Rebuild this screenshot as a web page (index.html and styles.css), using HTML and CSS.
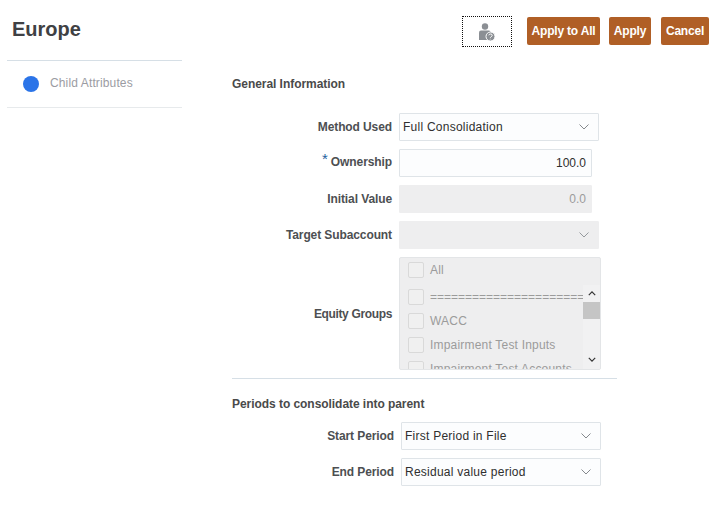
FILE: index.html
```html
<!DOCTYPE html>
<html lang="en">
<head>
<meta charset="utf-8">
<title>Europe</title>
<link rel="stylesheet" href="styles.css">
</head>
<body>
<div class="page">
  <header class="top">
    <h1 class="title">Europe</h1>
    <div class="actions">
      <button class="help" type="button" aria-label="Help">
        <svg width="18" height="20" viewBox="0 0 18 20">
          <circle cx="7" cy="4.500" r="3.200" fill="#8b8f94"/>
          <path d="M1 10.500 Q1 8.500 3 8.500 H11 Q12.500 8.500 12.500 10 V18 H1 Z" fill="#8b8f94"/>
          <circle cx="12.500" cy="14.500" r="4.500" fill="#8b8f94" stroke="#fff" stroke-width="1"/>
          <path d="M10.800 13.300 Q11 12 12.500 12 Q14.300 12 14.200 13.400 Q14.100 14.300 12.800 15 L12.300 15.700 M12.200 16.800 V17.400" fill="none" stroke="#fff" stroke-width="1"/>
        </svg>
      </button>
      <button class="btn btn-all" type="button">Apply to All</button>
      <button class="btn btn-apply" type="button">Apply</button>
      <button class="btn" type="button">Cancel</button>
    </div>
  </header>
  <div class="content">
    <nav class="side">
      <div class="side-item"><span class="dot"></span><span class="side-text">Child Attributes</span></div>
    </nav>
    <main class="main">
      <h2 class="heading">General Information</h2>
      <div class="rows">
        <div class="row">
          <label class="label">Method Used</label>
          <div class="field select"><span>Full Consolidation</span><svg class="chev" viewBox="0 0 10 6"><path d="M.5 .5 L5 5 L9.500 .5" fill="none" stroke="#85898d" stroke-width="1"/></svg></div>
        </div>
        <div class="row">
          <label class="label label-req"><span class="req">*</span> Ownership</label>
          <div class="field short num">100.0</div>
        </div>
        <div class="row">
          <label class="label">Initial Value</label>
          <div class="field short num off">0.0</div>
        </div>
        <div class="row">
          <label class="label">Target Subaccount</label>
          <div class="field select off"><span></span><svg class="chev" viewBox="0 0 10 6"><path d="M.5 .5 L5 5 L9.500 .5" fill="none" stroke="#95999d" stroke-width="1"/></svg></div>
        </div>
        <div class="row row-list">
          <label class="label label-tight">Equity Groups</label>
          <div class="listbox">
            <div class="opt opt-first"><span class="check"></span><span>All</span></div>
            <div class="scroller">
              <div class="items">
                <div class="opt"><span class="check"></span><span class="clip">==============================</span></div>
                <div class="opt"><span class="check"></span><span>WACC</span></div>
                <div class="opt"><span class="check"></span><span>Impairment Test Inputs</span></div>
                <div class="opt"><span class="check"></span><span>Impairment Test Accounts</span></div>
              </div>
              <div class="scrollbar">
                <svg class="sb-arrow" viewBox="0 0 10 6"><path d="M1 5 L5 1 L9 5" fill="none" stroke="#333" stroke-width="1.500"/></svg>
                <div class="thumb"></div>
                <svg class="sb-arrow sb-down" viewBox="0 0 10 6"><path d="M1 1 L5 5 L9 1" fill="none" stroke="#333" stroke-width="1.500"/></svg>
              </div>
            </div>
          </div>
        </div>
      </div>
      <hr class="rule">
      <h2 class="heading heading-2">Periods to consolidate into parent</h2>
      <div class="rows rows-2">
        <div class="row">
          <label class="label">Start Period</label>
          <div class="field select"><span>First Period in File</span><svg class="chev" viewBox="0 0 10 6"><path d="M.5 .5 L5 5 L9.500 .5" fill="none" stroke="#85898d" stroke-width="1"/></svg></div>
        </div>
        <div class="row">
          <label class="label">End Period</label>
          <div class="field select"><span>Residual value period</span><svg class="chev" viewBox="0 0 10 6"><path d="M.5 .5 L5 5 L9.500 .5" fill="none" stroke="#85898d" stroke-width="1"/></svg></div>
        </div>
      </div>
    </main>
  </div>
</div>
</body>
</html>
```
FILE: styles.css
```css
* { box-sizing: border-box; }
html, body { margin: 0; padding: 0; background: #fff; }
body { font-family: "Liberation Sans", Arial, sans-serif; font-size: 12px; color: #2f2f2f; }
.page { width: 724px; height: 509px; overflow: hidden; }

.top { display: flex; justify-content: space-between; height: 60px; padding: 16px 15px 0 12px; }
.title { margin: 2px 0 0; font-size: 20px; line-height: 23px; font-weight: 700; color: #3f4144; }
.actions { display: flex; align-items: flex-start; }
.help { width: 50px; height: 31px; border: 1px dotted #111; background: #fff; padding: 0; margin-right: 15px; display: flex; align-items: center; justify-content: center; }
.btn { height: 28px; margin-top: 1px; padding: 1px 0 0; border: 0; border-radius: 2px; background: #b05f26; color: #fff; white-space: nowrap; font: 700 12px/27px "Liberation Sans", Arial, sans-serif; letter-spacing: -.2px; }
.btn-all { width: 73px; margin-right: 9px; }
.btn-apply { width: 42px; margin-right: 10px; }
.btn:last-child { width: 48px; }

.content { display: flex; }
.side { width: 175px; margin-left: 7px; }
.side-item { height: 48px; display: flex; align-items: center; gap: 11px; padding-left: 16px; border-top: 1px solid #d6dfe6; border-bottom: 1px solid #e7eaec; color: #9b9ca3; }
.side-text { letter-spacing: .13px; margin-top: -2px; }
.dot { width: 16px; height: 16px; border-radius: 50%; background: #2b74e8; }

.main { margin-left: 50px; width: 385px; }
.heading { margin: 16px 0 0; font-size: 12px; line-height: 16px; font-weight: 700; color: #4a4a4a; letter-spacing: -.05px; }
.rows { margin-top: 21px; display: flex; flex-direction: column; gap: 8px; }
.row { display: flex; align-items: center; gap: 7px; }
.label { width: 160px; flex: none; text-align: right; font-weight: 700; color: #4d4f52; letter-spacing: -.1px; }
.label-req { margin-top: -2px; }
.label-tight { letter-spacing: -.35px; }
.req { position: relative; top: -2px; font-weight: 400; color: #1f5f9e; font-size: 15px; line-height: 12px; }

.field { height: 28px; width: 200px; border: 1px solid #dfe4e8; background: #fcfdfe; color: #2f2f2f; border-radius: 1px; display: flex; align-items: center; letter-spacing: .25px; }
.select { justify-content: space-between; padding: 0 9px 0 3px; }
.short { width: 193px; }
.num { justify-content: flex-end; padding-right: 5px; letter-spacing: 0; }
.off { background: #eeeeef; border-color: #eeeeef; color: #9b9b9b; }
.chev { width: 10px; height: 6px; }

.listbox { width: 202px; height: 113px; border: 1px solid #e3e5e7; border-radius: 2px; background: #eeeeef; overflow: hidden; color: #9b9b9b; letter-spacing: .2px; }
.opt { height: 24px; display: flex; align-items: center; gap: 6px; padding-left: 8px; white-space: nowrap; }
.opt-first { margin-bottom: 3px; }
.check { width: 16px; height: 16px; flex: none; border: 1px solid #d9d9d9; border-radius: 2px; background: #f0f0f0; }
.scroller { display: flex; height: 85px; overflow: hidden; }
.items { width: 183px; overflow: hidden; }
.clip { overflow: hidden; letter-spacing: 0; }
.scrollbar { width: 17px; background: #f1f1f2; display: flex; flex-direction: column; align-items: center; }
.sb-arrow { width: 8px; height: 5px; margin-top: 6px; flex: none; }
.thumb { width: 100%; height: 17px; margin-top: 6px; background: #c5c5c5; flex: none; }
.sb-down { margin-top: auto; margin-bottom: 8px; }

.rule { margin: 8px 0 0; border: 0; border-top: 1px solid #d6dfe6; }
.heading-2 { margin-top: 17px; }
.rows-2 { margin-top: 10px; }
.rows-2 .label { width: 162px; }
```
